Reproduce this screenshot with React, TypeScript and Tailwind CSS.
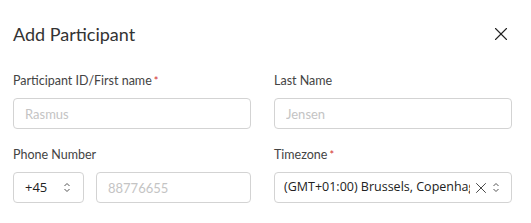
import { X } from "lucide-react";

const Chevrons = () => (
  <svg width="8" height="11" viewBox="0 0 8 11" fill="none" stroke="#555" strokeWidth="1">
    <path d="M1.5 4 L4 1.5 L6.5 4" />
    <path d="M1.5 7 L4 9.5 L6.5 7" />
  </svg>
);

const Label = ({ text, required }: { text: string; required?: boolean }) => (
  <div className="text-[12.5px] leading-[16px] text-[#444] mb-[9px]">
    {text}
    {required && <span className="text-[#d32f2f] text-[11px] align-top ml-[2px]">*</span>}
  </div>
);

const inputCls =
  "h-[31px] w-full rounded-[4px] border border-[#d3d3d3] px-[11px] text-[13px] text-[#333] placeholder:text-[#c4c4c4] outline-none font-['Lato',sans-serif]";

export default function App() {
  return (
    <div className="w-[531px] h-[223px] bg-white font-['Lato',sans-serif] pl-[13px] pr-[19px] pt-[22px]">
      <div className="flex items-center justify-between h-[24px]">
        <h2 className="text-[18px] text-[#333]">Add Participant</h2>
        <button className="text-[#222]">
          <X size={22} strokeWidth={1.2} />
        </button>
      </div>

      <div className="grid grid-cols-2 gap-x-[23px] mt-[27px]">
        <div>
          <Label text="Participant ID/First name" required />
          <input className={inputCls} placeholder="Rasmus" />
        </div>
        <div>
          <Label text="Last Name" />
          <input className={inputCls} placeholder="Jensen" />
        </div>

        <div className="mt-[18px]">
          <Label text="Phone Number" />
          <div className="flex gap-[12px]">
            <div className="h-[31px] w-[71px] shrink-0 rounded-[4px] border border-[#d3d3d3] flex items-center justify-between pl-[11px] pr-[12px] font-['Open_Sans',sans-serif] text-[13px] text-[#222]">
              <span>+45</span>
              <Chevrons />
            </div>
            <input className={inputCls} placeholder="88776655" />
          </div>
        </div>
        <div className="mt-[18px]">
          <Label text="Timezone" required />
          <div className="h-[31px] w-full rounded-[4px] border border-[#d3d3d3] flex items-center pl-[9px] pr-[11px] font-['Open_Sans',sans-serif] text-[12.5px] text-[#222]">
            <span className="whitespace-nowrap overflow-hidden w-[186px] shrink-0">
              (GMT+01:00) Brussels, Copenhagen, Madrid, Paris
            </span>
            <X size={18} strokeWidth={1.3} className="ml-[2px] text-[#444] shrink-0" />
            <span className="ml-auto">
              <Chevrons />
            </span>
          </div>
        </div>
      </div>
    </div>
  );
}
